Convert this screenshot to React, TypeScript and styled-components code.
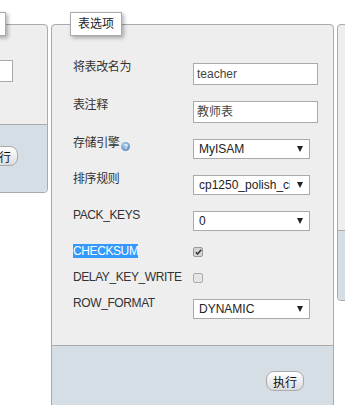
import React from 'react'
import styled, { createGlobalStyle } from 'styled-components'

const GlobalStyle = createGlobalStyle`
  body {
    margin: 0;
    background: #fff;
    font-family: "Liberation Sans", "Noto Sans CJK SC", sans-serif;
  }
`

const Page = styled.div`
  display: flex;
  align-items: flex-start;
  gap: 3px;
  width: 345px;
  height: 405px;
  overflow: hidden;
`

const Panel = styled.fieldset<{ $width: number; $shift?: number }>`
  flex-shrink: 0;
  box-sizing: border-box;
  width: ${({ $width }) => $width}px;
  min-width: 0;
  margin: 12px 0 0 ${({ $shift }) => $shift ?? 0}px;
  padding: 0;
  border: 1px solid #aaa;
  border-radius: 4px;
  background: #eeeeee;
`

const Legend = styled.legend<{ $offset: number; $width?: number }>`
  box-sizing: border-box;
  height: 24px;
  ${({ $width }) => ($width ? `width: ${$width}px;` : '')}
  margin-left: ${({ $offset }) => $offset}px;
  padding: 0 7px;
  line-height: 22px;
  font-size: 12px;
  color: #222;
  white-space: nowrap;
  background: #fff;
  border: 1px solid #aaa;
  box-shadow: 2px 2px 4px rgba(0, 0, 0, 0.3);
`

const Body = styled.div<{ $height?: number }>`
  box-sizing: border-box;
  ${({ $height }) => ($height ? `height: ${$height}px;` : '')}
`

const MoveBody = styled(Body)`
  display: flex;
  justify-content: flex-end;
  align-items: flex-start;
  gap: 6px;
  padding: 24px 34px 0 0;
`

const OptionsGrid = styled.div`
  display: grid;
  grid-template-columns: 120px auto;
  row-gap: 16px;
  align-items: start;
  padding: 27px 15px 26px 21px;
`

const Label = styled.div`
  margin: -3px 0 -1px;
  line-height: 14px;
  font-size: 12px;
  letter-spacing: -0.4px;
  color: #333;
  white-space: nowrap;
`

const Marked = styled.span`
  background: #3399ff;
  color: #fff;
`

const Help = styled.span`
  display: inline-block;
  width: 9px;
  height: 9px;
  margin-left: 2px;
  border-radius: 50%;
  background: radial-gradient(circle at 35% 30%, #a9c8ea, #4b7fbf);
  color: #fff;
  font-size: 7px;
  line-height: 9px;
  letter-spacing: 0;
  text-align: center;
  font-weight: bold;
  vertical-align: -2px;
`

const TextInput = styled.div<{ $width?: number }>`
  box-sizing: border-box;
  width: ${({ $width }) => $width ?? 125}px;
  height: 22px;
  padding: 0 3px;
  border: 1px solid #aaa;
  background: #fff;
  font-size: 12px;
  line-height: 20px;
  color: #444;
  white-space: nowrap;
  overflow: hidden;
`

const Select = styled.div`
  display: flex;
  align-items: center;
  justify-content: space-between;
  box-sizing: border-box;
  width: 117px;
  height: 20px;
  padding: 0 6px 0 5px;
  border: 1px solid #aaa;
  background: #fff;
  font-size: 12px;
  line-height: 18px;
  color: #222;

  &::after {
    content: '';
    flex-shrink: 0;
    border-left: 3.5px solid transparent;
    border-right: 3.5px solid transparent;
    border-top: 6px solid #222;
  }
`

const SelectValue = styled.span`
  width: 91px;
  white-space: nowrap;
  overflow: hidden;
`

const Check = styled.span<{ $checked?: boolean }>`
  display: flex;
  align-items: center;
  justify-content: center;
  box-sizing: border-box;
  width: 10px;
  height: 10px;
  border: 1px solid ${({ $checked }) => ($checked ? '#999' : '#aaa')};
  border-radius: 2px;
  background: ${({ $checked }) => ($checked ? '#d4d4d4' : '#e6e6e6')};
`

const Footer = styled.div<{ $height: number; $top: number }>`
  box-sizing: border-box;
  height: ${({ $height }) => $height}px;
  padding: ${({ $top }) => $top}px 29px 0 0;
  border-top: 1px solid #aaa;
  border-radius: 0 0 3px 3px;
  background: #d6dee5;
  text-align: right;
`

const Submit = styled.button`
  height: 20px;
  padding: 0 6px;
  border: 1px solid #aaa;
  border-radius: 8px;
  background: linear-gradient(#ffffff, #dcdcdc);
  font-family: "Liberation Sans", "Noto Sans CJK SC", sans-serif;
  font-size: 12px;
  color: #111;
`

const Tick = () => (
  <svg width="7" height="6" viewBox="0 0 7 6">
    <path d="M0.8 3.2 L2.6 5 L6.2 0.8" fill="none" stroke="#333" strokeWidth="1.5" />
  </svg>
)

const Dropdown = ({ value }: { value: string }) => (
  <Select>
    <SelectValue>{value}</SelectValue>
  </Select>
)

const options: { label: React.ReactNode; control: React.ReactNode }[] = [
  { label: '将表改名为', control: <TextInput>teacher</TextInput> },
  { label: '表注释', control: <TextInput>教师表</TextInput> },
  { label: <>存储引擎<Help>?</Help></>, control: <Dropdown value="MyISAM" /> },
  { label: '排序规则', control: <Dropdown value="cp1250_polish_ci" /> },
  { label: 'PACK_KEYS', control: <Dropdown value="0" /> },
  { label: <Marked>CHECKSUM</Marked>, control: <Check $checked><Tick /></Check> },
  { label: 'DELAY_KEY_WRITE', control: <Check /> },
  { label: 'ROW_FORMAT', control: <Dropdown value="DYNAMIC" /> },
]

const App: React.FunctionComponent = () => {
  return (
    <>
      <GlobalStyle />
      <Page>
        <Panel $width={300} $shift={-252}>
          <Legend $offset={57} $width={200} />
          <MoveBody $height={88}>
            <TextInput $width={100} />
            <TextInput $width={110} />
          </MoveBody>
          <Footer $height={68} $top={21}>
            <Submit>执行</Submit>
          </Footer>
        </Panel>

        <Panel $width={283}>
          <Legend $offset={18}>表选项</Legend>
          <OptionsGrid>
            {options.map((item, index) => (
              <React.Fragment key={index}>
                <Label>{item.label}</Label>
                {item.control}
              </React.Fragment>
            ))}
          </OptionsGrid>
          <Footer $height={80} $top={25}>
            <Submit>执行</Submit>
          </Footer>
        </Panel>

        <Panel $width={300}>
          <Legend $offset={18} $width={120} />
          <Body $height={194} />
          <Footer $height={70} $top={21} />
        </Panel>
      </Page>
    </>
  )
}

export default App
